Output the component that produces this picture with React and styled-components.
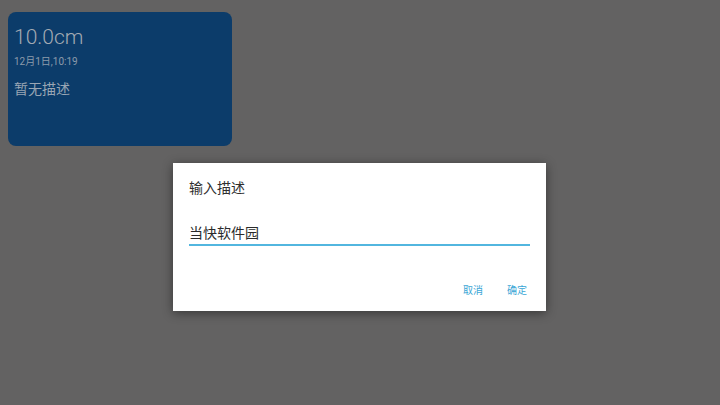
import React from "react";
import styled, { createGlobalStyle } from "styled-components";

const GlobalStyle = createGlobalStyle`
  html, body {
    margin: 0;
    padding: 0;
    width: 720px;
    height: 405px;
    overflow: hidden;
    background: #636262;
    font-family: "Roboto", "Noto Sans CJK SC", sans-serif;
  }
`;

const Screen = styled.div`
  position: relative;
  width: 720px;
  height: 405px;
  background: #636262;
  padding: 12px 0 0 8px;
  box-sizing: border-box;
`;

const Card = styled.div`
  width: 224px;
  height: 134px;
  box-sizing: border-box;
  background: #0c3c6a;
  border-radius: 8px;
  padding: 13px 6px;
  display: flex;
  flex-direction: column;
`;

const Size = styled.div`
  font-size: 21px;
  font-weight: 300;
  line-height: 24px;
  color: #a3aab3;
`;

const Time = styled.div`
  font-size: 10px;
  line-height: 12px;
  margin-top: 7px;
  color: #8d9bab;
`;

const Desc = styled.div`
  font-size: 14px;
  line-height: 16px;
  margin-top: 13px;
  color: #9aa6b4;
`;

const Overlay = styled.div`
  position: absolute;
  left: 0;
  top: 0;
  width: 720px;
  height: 405px;
  display: flex;
  justify-content: center;
  padding-top: 163px;
  box-sizing: border-box;
  padding-right: 1px;
`;

const Dialog = styled.div`
  width: 373px;
  height: 148px;
  box-sizing: border-box;
  background: #ffffff;
  box-shadow: 0 2px 10px rgba(0, 0, 0, 0.45);
  padding: 16px 16px 0 16px;
  display: flex;
  flex-direction: column;
  align-self: flex-start;
`;

const Title = styled.div`
  font-size: 14px;
  line-height: 18px;
  color: #2e2e2e;
`;

const Field = styled.div`
  margin-top: 27px;
  width: 341px;
  border-bottom: 2px solid #52b6df;
  padding-bottom: 2px;
  font-size: 14px;
  line-height: 18px;
  color: #2b2b2b;
`;

const Actions = styled.div`
  display: flex;
  justify-content: flex-end;
  gap: 24px;
  margin-top: 39px;
  padding-right: 3px;
`;

const ActionButton = styled.button`
  border: none;
  background: none;
  padding: 0;
  font-family: inherit;
  font-size: 10px;
  line-height: 12px;
  color: #3aa6d6;
  cursor: pointer;
`;

export default function App() {
  return (
    <>
      <GlobalStyle />
      <Screen>
        <Card>
          <Size>10.0cm</Size>
          <Time>12月1日,10:19</Time>
          <Desc>暂无描述</Desc>
        </Card>
        <Overlay>
          <Dialog>
            <Title>输入描述</Title>
            <Field>当快软件园</Field>
            <Actions>
              <ActionButton>取消</ActionButton>
              <ActionButton>确定</ActionButton>
            </Actions>
          </Dialog>
        </Overlay>
      </Screen>
    </>
  );
}
